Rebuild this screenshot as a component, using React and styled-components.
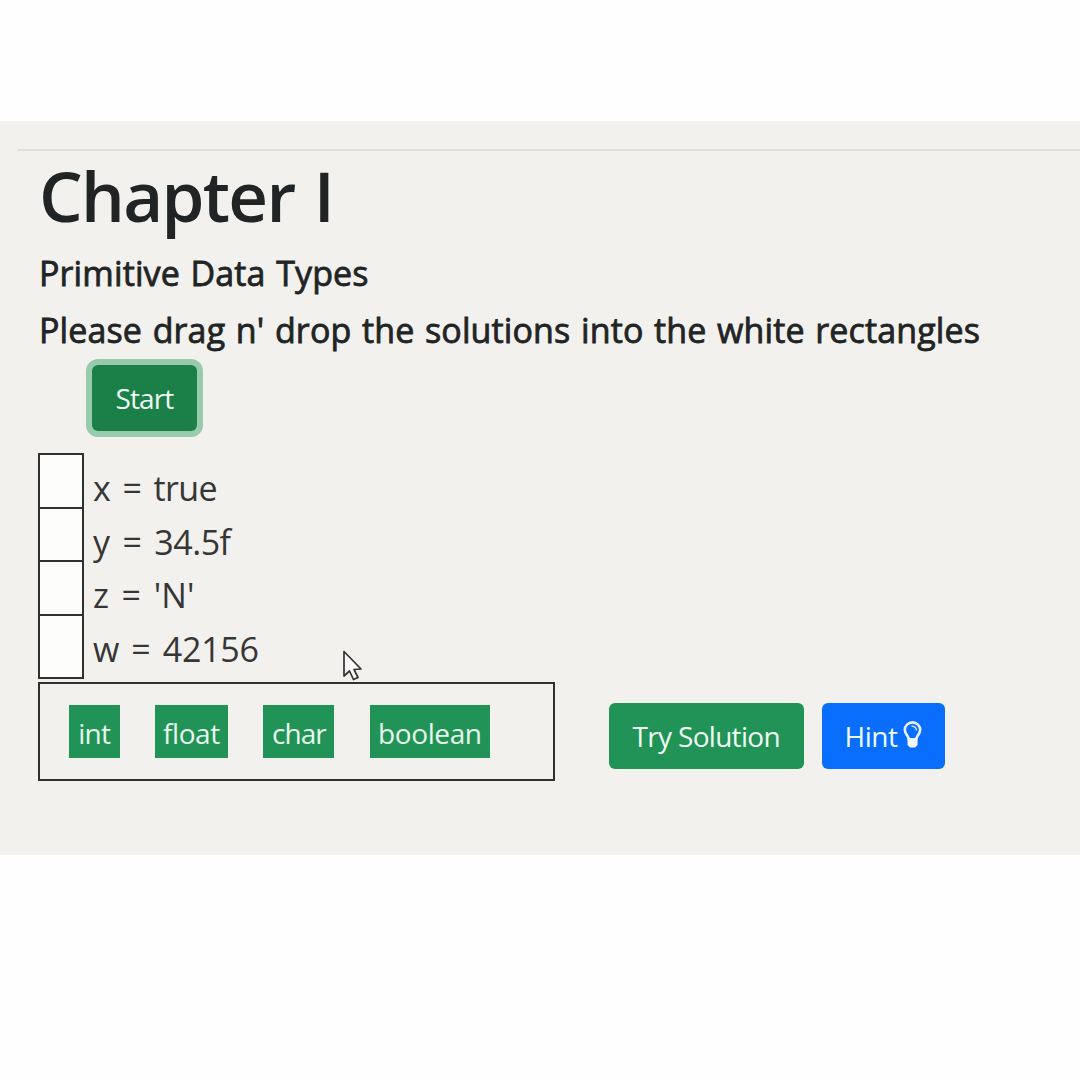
import React from "react";
import styled, { createGlobalStyle, css } from "styled-components";

const GlobalStyle = createGlobalStyle`
  * { box-sizing: border-box; }
  body { margin: 0; background: #fefefe; }
`;

const Page = styled.div`
  height: 1080px;
  padding-top: 121px;
  overflow: hidden;
  font-family: "Open Sans", "Noto Sans", sans-serif;
  color: #212425;
`;

const Stage = styled.main`
  position: relative;
  height: 734px;
  padding: 28px 0 0 38px;
  background: #f2f1ed;
`;

const Divider = styled.hr`
  height: 2px;
  margin: 0 0 0 -20px;
  border: 0;
  background: #dededa;
`;

const text = css`
  margin: 0;
  white-space: nowrap;
  letter-spacing: ${(p) => p.$track || 0}px;
`;

const Title = styled.h1`
  ${text}
  padding-left: 1px;
  font-size: 69px;
  font-weight: 600;
  line-height: 88px;
  word-spacing: 3px;
  height: 94px;
`;

const Heading = styled.h5`
  ${text}
  padding-left: 1px;
  font-size: 34px;
  font-weight: 400;
  line-height: 57px;
  word-spacing: 1.6px;
  -webkit-text-stroke: 0.8px currentColor;
`;

const Button = styled.button`
  display: flex;
  align-items: center;
  justify-content: center;
  gap: 6px;
  flex: none;
  width: ${(p) => p.$width}px;
  height: 66px;
  padding: 0;
  border: 0;
  border-radius: 6px;
  color: #eefaf3;
  background: ${(p) => p.$color};
  font: 400 28px/40px "Open Sans", "Noto Sans", sans-serif;
  letter-spacing: ${(p) => p.$track || 0}px;
  white-space: nowrap;
  box-shadow: ${(p) => (p.$focused ? "0 0 0 6px #98cbae" : "none")};
`;

const StartRow = styled.div`
  padding: 6px 0 22px 54px;
`;

const Statements = styled.div`
  display: flex;
  flex-direction: column;
`;

const Statement = styled.div`
  display: flex;
  height: ${(p) => (p.$last ? 65 : 53.6)}px;
`;

const Slot = styled.div`
  width: 46px;
  border: 2px solid #303030;
  border-bottom-width: ${(p) => (p.$last ? 2 : 0)}px;
  background: #fdfdfc;
`;

const Code = styled.span`
  padding: 11px 0 0 9px;
  font-size: 34px;
  line-height: 48px;
  color: #363636;
  white-space: nowrap;
  letter-spacing: ${(p) => p.$track}px;
  word-spacing: ${(p) => p.$gap}px;
`;

const Actions = styled.div`
  display: flex;
  align-items: center;
  margin-top: 3px;
`;

const Pool = styled.div`
  display: flex;
  align-items: center;
  gap: 35.4px;
  width: 517px;
  height: 99px;
  margin-right: 53.5px;
  padding-left: 29px;
  border: 2px solid #303030;
`;

const Chip = styled.div`
  width: ${(p) => p.$width}px;
  height: 53px;
  color: #e6f8ee;
  background: #229356;
  font-size: 28px;
  line-height: 57px;
  text-align: center;
  white-space: nowrap;
  letter-spacing: ${(p) => p.$track || 0}px;
`;

const Buttons = styled.div`
  display: flex;
  gap: 18px;
  padding-top: 9px;
`;

const Pointer = styled.svg`
  position: absolute;
  left: 342px;
  top: 528px;
`;

const statements = [
  { code: "x = true", track: -0.6, gap: 4 },
  { code: "y = 34.5f", track: -0.5, gap: 4.6 },
  { code: "z = 'N'", track: 0.1, gap: 3.6 },
  { code: "w = 42156", track: -0.2, gap: 3.5 },
];

const types = [
  { name: "int", width: 50.5, track: -0.7 },
  { name: "float", width: 73, track: -0.4 },
  { name: "char", width: 71.2, track: -0.9 },
  { name: "boolean", width: 120, track: -0.4 },
];

const Bulb = () => (
  <svg width="19" height="30" viewBox="0 0 19 30" fill="none">
    <path
      d="M6 18.500C5.700 15.300 1.800 13 1.800 8.800a7.700 7.400 0 0 1 15.400 0c0 4.200-3.900 6.500-4.200 9.700z"
      stroke="#e8f3ff"
      strokeWidth="2.600"
    />
    <path d="M8.500 5.200q4.500-.4 5 4.300" stroke="#c5dfff" strokeWidth="1.500" />
    <path d="M4.500 17h10v7l-2.500 2.500H7l-2.500-2.500z" fill="#f5faff" />
  </svg>
);

export default function App() {
  return (
    <Page>
      <GlobalStyle />
      <Stage>
        <Divider />
        <Title $track={-1.7}>Chapter I</Title>
        <Heading $track={0.13}>Primitive Data Types</Heading>
        <Heading $track={0.13}>Please drag n' drop the solutions into the white rectangles</Heading>
        <StartRow>
          <Button $width={105} $color="#1b7f48" $track={-0.9} $focused>Start</Button>
        </StartRow>
        <Statements>
          {statements.map((s, i) => (
            <Statement key={s.code} $last={i === statements.length - 1}>
              <Slot $last={i === statements.length - 1} />
              <Code $track={s.track} $gap={s.gap}>{s.code}</Code>
            </Statement>
          ))}
        </Statements>
        <Actions>
          <Pool>
            {types.map((t) => (
              <Chip key={t.name} $width={t.width} $track={t.track}>{t.name}</Chip>
            ))}
          </Pool>
          <Buttons>
            <Button $width={195.5} $color="#229356" $track={-0.7}>Try Solution</Button>
            <Button $width={123} $color="#086efb" $track={-0.5}>Hint<Bulb /></Button>
          </Buttons>
        </Actions>
        <Pointer width="22" height="34" viewBox="0 0 22 34">
          <path
            d="M2 2.500V27l5.500-5 4 8.500 4.500-2-4-8 7-.5z"
            fill="#fafafa"
            stroke="#333"
            strokeWidth="1.700"
            strokeLinejoin="round"
          />
        </Pointer>
      </Stage>
    </Page>
  );
}
